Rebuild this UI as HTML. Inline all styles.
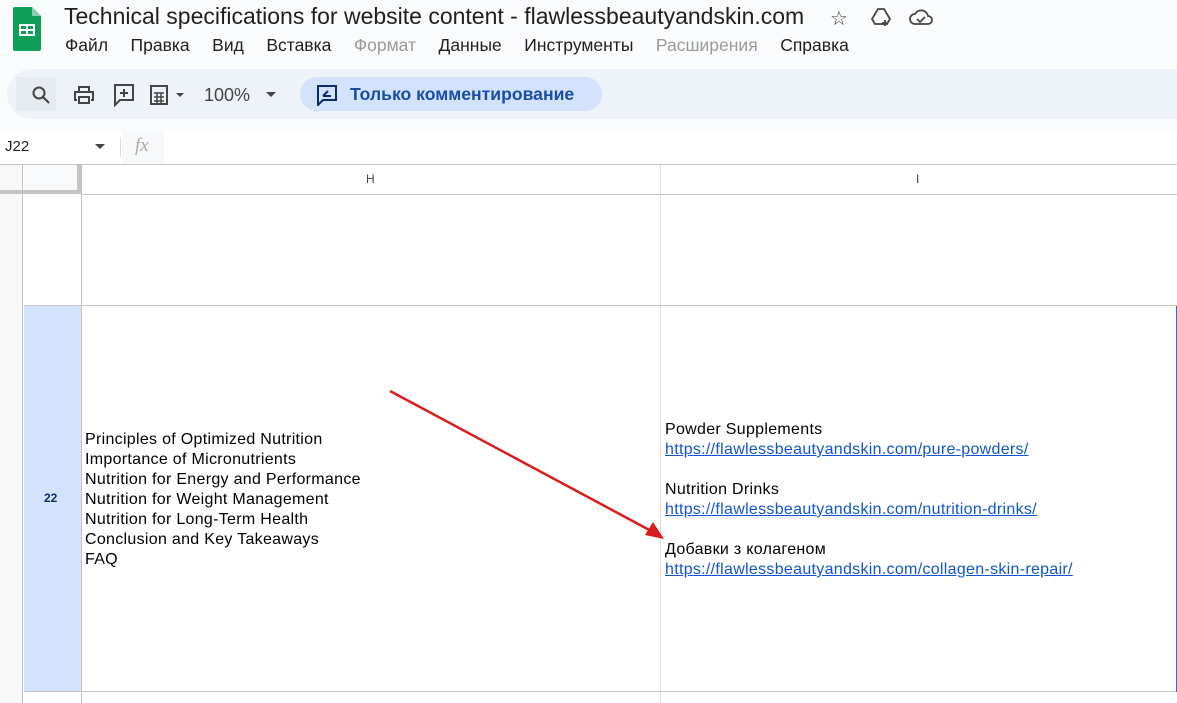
<!DOCTYPE html>
<html><head><meta charset="utf-8"><style>
*{margin:0;padding:0;box-sizing:border-box}
body{width:1177px;height:703px;overflow:hidden;background:#f9fbfd;font-family:"Liberation Sans",Arial,sans-serif;position:relative}
.a{position:absolute}
.menu span{margin-right:22.5px}
.cell{font-size:16px;line-height:20px;color:#000;white-space:pre;letter-spacing:0.3px}
a{color:#1155cc;text-decoration:underline}
</style></head><body>
<svg class="a" style="left:13px;top:7px" width="28" height="44" viewBox="0 0 28 44"><path d="M2 0h17l9 9v33a2 2 0 0 1-2 2H2a2 2 0 0 1-2-2V2a2 2 0 0 1 2-2z" fill="#0f9d58"/><path d="M19 0v9h9z" fill="#87ceac"/><rect x="6" y="17" width="16" height="12" fill="#fff"/><rect x="8" y="19" width="5" height="3" fill="#0f9d58"/><rect x="15" y="19" width="5" height="3" fill="#0f9d58"/><rect x="8" y="24" width="5" height="3" fill="#0f9d58"/><rect x="15" y="24" width="5" height="3" fill="#0f9d58"/></svg>
<div class="a" style="left:64px;top:3px;font-size:23px;color:#1f1f1f">Technical specifications for website content - flawlessbeautyandskin.com</div>
<div class="a" style="left:830px;top:6px;font-size:20px;color:#444">☆</div>
<svg class="a" style="left:870px;top:6px" width="22" height="22" viewBox="0 0 22 22" fill="none" stroke="#444" stroke-width="1.8"><path d="M8 3h6l6 10-3 5H5l-3-5z"/><path d="M15 14v6M12 17h6"/></svg>
<svg class="a" style="left:908px;top:7px" width="26" height="20" viewBox="0 0 26 20" fill="none" stroke="#444" stroke-width="1.8"><path d="M7 17a5 5 0 0 1 0-10 7 7 0 0 1 13 2 4 4 0 0 1 0 8z"/><path d="M9 12l3 3 5-5"/></svg>
<div class="a menu" style="left:65px;top:35px;font-size:17.5px;color:#1f1f1f;white-space:nowrap"><span>Файл</span><span>Правка</span><span>Вид</span><span>Вставка</span><span style="color:#9a9a9a">Формат</span><span>Данные</span><span>Инструменты</span><span style="color:#9a9a9a">Расширения</span><span>Справка</span></div>
<div class="a" style="left:7px;top:69px;width:1190px;height:50px;background:#eef2f9;border-radius:25px"></div>
<div class="a" style="left:16px;top:77px;width:40px;height:34px;background:#e6eaf1"></div>
<svg class="a" style="left:31px;top:85px" width="20" height="20" viewBox="0 0 20 20" fill="none" stroke="#444" stroke-width="2"><circle cx="8" cy="8" r="5.5"/><path d="M12 12l6 6"/></svg>
<svg class="a" style="left:73px;top:84px" width="22" height="22" viewBox="0 0 22 22" fill="none" stroke="#444" stroke-width="2"><path d="M6 7V3h10v4M4 16H2V8h18v8h-2M6 13h10v6H6z"/></svg>
<svg class="a" style="left:113px;top:83px" width="22" height="24" viewBox="0 0 22 24" fill="none" stroke="#444" stroke-width="2"><path d="M2 2h18v15H7l-5 5z"/><path d="M11 6v8M7 10h8"/></svg>
<svg class="a" style="left:150px;top:84px" width="40" height="22" viewBox="0 0 40 22" fill="#444"><path d="M1 2h16v18H1z" fill="none" stroke="#444" stroke-width="2"/><path d="M4 9h10M4 13h10M4 17h10M7 9v10M11 9v10" stroke="#444" stroke-width="1.5"/><path d="M26 9h8l-4 4z"/></svg>
<div class="a" style="left:204px;top:85px;font-size:18px;color:#444">100%</div>
<svg class="a" style="left:264px;top:90px" width="14" height="10"><path d="M2 2h10l-5 5z" fill="#444"/></svg>
<div class="a" style="left:300px;top:77px;width:302px;height:34px;background:#d3e3fd;border-radius:17px"></div>
<svg class="a" style="left:316px;top:84px" width="22" height="22" viewBox="0 0 22 22" fill="none" stroke="#0b2e6b" stroke-width="2"><path d="M2 2h18v14H7l-5 5z"/><path d="M7 12l5-5M7 12h8" /></svg>
<div class="a" style="left:350px;top:84px;font-size:17.6px;font-weight:bold;color:#174ea6">Только комментирование</div>
<div class="a" style="left:0;top:131px;width:1177px;height:33px;background:#fff"></div>
<div class="a" style="left:5px;top:138px;font-size:15px;color:#1f1f1f">J22</div>
<svg class="a" style="left:94px;top:143px" width="12" height="8"><path d="M1 1h10l-5 5z" fill="#444"/></svg>
<div class="a" style="left:120px;top:137px;width:1px;height:20px;background:#ddd"></div>
<div class="a" style="left:122px;top:131px;width:42px;height:33px;background:#f6f8fa"></div>
<div class="a" style="left:135px;top:135px;font-size:19px;color:#aaa;font-style:italic;font-family:'Liberation Serif',serif">fx</div>
<div class="a" style="left:0;top:164px;width:1177px;height:539px;background:#fff;border-top:1px solid #c4c4c4"></div>
<div class="a" style="left:0;top:165px;width:23px;height:538px;background:#f8f8f8;border-right:1px solid #c4c4c4"></div>
<div class="a" style="left:24px;top:165px;width:53px;height:25px;background:#f8f9fa"></div>
<div class="a" style="left:0;top:190px;width:82px;height:4px;background:#c4c4c4"></div>
<div class="a" style="left:77px;top:165px;width:5px;height:29px;background:#c4c4c4"></div>
<div class="a" style="left:81px;top:165px;width:1px;height:538px;background:#c4c4c4"></div>
<div class="a" style="left:82px;top:194px;width:1095px;height:1px;background:#c4c4c4"></div>
<div class="a" style="left:660px;top:165px;width:1px;height:538px;background:#e0e0e0"></div>
<div class="a" style="left:24px;top:305px;width:1153px;height:1px;background:#c4c4c4"></div>
<div class="a" style="left:24px;top:306px;width:57px;height:385px;background:#d3e3fd"></div>
<div class="a" style="left:24px;top:691px;width:1153px;height:1px;background:#c4c4c4"></div>
<div class="a" style="left:1176px;top:306px;width:1px;height:386px;background:#1a73e8"></div>
<div class="a" style="left:366px;top:172px;font-size:12px;color:#444">H</div>
<div class="a" style="left:916px;top:172px;font-size:12px;color:#444">I</div>
<div class="a" style="left:44px;top:491px;font-size:12px;font-weight:bold;color:#0b2e6b">22</div>
<div class="a cell" style="left:85px;top:430px">Principles of Optimized Nutrition
Importance of Micronutrients
Nutrition for Energy and Performance
Nutrition for Weight Management
Nutrition for Long-Term Health
Conclusion and Key Takeaways
FAQ</div>
<div class="a cell" style="left:665px;top:420px">Powder Supplements
<a>https://flawlessbeautyandskin.com/pure-powders/</a>

Nutrition Drinks
<a>https://flawlessbeautyandskin.com/nutrition-drinks/</a>

Добавки з колагеном
<a>https://flawlessbeautyandskin.com/collagen-skin-repair/</a></div>
<svg class="a" style="left:0;top:0" width="1177" height="703"><path d="M390 391L655 533" stroke="#d91c1c" stroke-width="2.5"/><path d="M664 539L645 535L653 522z" fill="#d91c1c"/></svg>
</body></html>
